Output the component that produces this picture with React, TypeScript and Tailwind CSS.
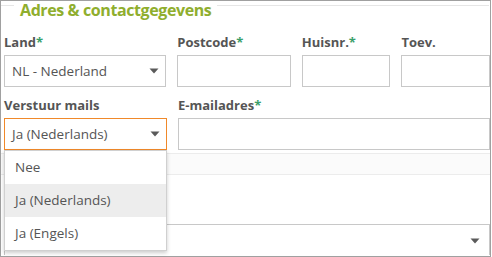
import React from "react";

const font = { fontFamily: '"Open Sans", "Noto Sans", sans-serif' };

function Arrow() {
  return (
    <svg width="10" height="6" viewBox="0 0 10 6" className="block">
      <path d="M0.5 0.5 H9.5 L5 5.5 Z" fill="#5a5a5a" />
    </svg>
  );
}

function Label({ text, req }: { text: string; req?: boolean }) {
  return (
    <div className="h-[20px] text-[13px] font-bold leading-[20px] text-[#555]">
      {text}
      {req && <span className="text-[#3aa06a]">*</span>}
    </div>
  );
}

export default function App() {
  return (
    <div className="w-[492px] h-[257px] bg-white" style={font}>
      <div className="relative w-[491px] h-[257px] border border-[#a0a0a0]">
        {/* legend */}
        <div className="flex items-start h-[20px] pt-[1px]">
          <div className="w-[13px] mt-[3px] border-t border-[#e6e6e6]" />
          <div className="px-[6px] text-[16px] tracking-[-0.4px] font-bold leading-[16px] text-[#8fae2e]">
            Adres &amp; contactgegevens
          </div>
          <div className="flex-1 mt-[3px] mr-[1px] border-t border-[#e6e6e6]" />
        </div>

        <div className="pl-[3px] pt-[11px]">
          {/* row 1 */}
          <div className="flex gap-[11px]">
            <div className="w-[163px]">
              <Label text="Land" req />
              <div className="mt-[3px] h-[32px] border border-[#c8c8c8] flex items-center justify-between pl-[7px] pr-[6px] text-[13.5px] text-[#555]">
                <span>NL - Nederland</span>
                <Arrow />
              </div>
            </div>
            <div className="w-[114px]">
              <Label text="Postcode" req />
              <div className="mt-[3px] h-[32px] border border-[#c8c8c8]" />
            </div>
            <div className="w-[89px]">
              <Label text="Huisnr." req />
              <div className="mt-[3px] h-[32px] border border-[#c8c8c8]" />
            </div>
            <div className="w-[89px]">
              <Label text="Toev." />
              <div className="mt-[3px] h-[32px] border border-[#c8c8c8]" />
            </div>
          </div>

          {/* row 2 */}
          <div className="flex gap-[11px] mt-[8px]">
            <div className="w-[163px]">
              <Label text="Verstuur mails" />
              <div className="mt-[3px] h-[32px] border border-[#f0892a] flex items-center justify-between pl-[7px] pr-[6px] text-[13.5px] text-[#555]">
                <span>Ja (Nederlands)</span>
                <Arrow />
              </div>
            </div>
            <div className="w-[312px]">
              <Label text="E-mailadres" req />
              <div className="mt-[3px] h-[32px] border border-[#c8c8c8]" />
            </div>
          </div>
        </div>

        {/* band */}
        <div className="mt-[3px] h-[22px] border-y border-[#ececec] bg-[#fbfbfb]" />

        <div className="pl-[3px] pt-[49px]">
          <div className="w-[486px] h-[31px] border border-b-0 border-[#c8c8c8] flex items-start justify-end pr-[9px] pt-[13px]">
            <Arrow />
          </div>
        </div>

        {/* dropdown list */}
        <div className="absolute left-[3px] top-[149px] w-[163px] bg-white border border-[#d0d0d0] shadow-[0_2px_4px_rgba(0,0,0,0.2)] text-[13.5px] text-[#555]">
          <div className="h-[33px] flex items-center pl-[10px]">Nee</div>
          <div className="h-[33px] flex items-center pl-[10px] bg-[#ededed]">Ja (Nederlands)</div>
          <div className="h-[33px] flex items-center pl-[10px]">Ja (Engels)</div>
        </div>
      </div>
    </div>
  );
}
